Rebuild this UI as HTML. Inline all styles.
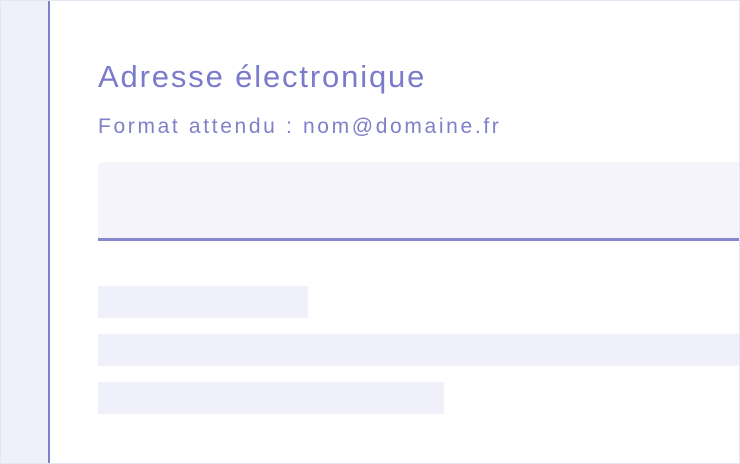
<!DOCTYPE html>
<html><head><style>
html,body{margin:0;padding:0;}
body{width:740px;height:464px;position:relative;overflow:hidden;background:#fff;font-family:"Liberation Sans",sans-serif;}
.frame{position:absolute;left:0;top:0;width:738px;height:462px;border:1px solid #e5e5f4;}
.side{position:absolute;left:1px;top:1px;width:47px;height:462px;background:#f0f0fa;border-right:2px solid #8080d0;}
.t{position:absolute;left:98px;top:59px;font-size:31px;line-height:36px;letter-spacing:1.85px;color:#7b7bcc;white-space:nowrap;}
.s{position:absolute;left:98px;top:114px;font-size:21px;line-height:26px;letter-spacing:2.65px;color:#8080c8;white-space:nowrap;}
.inp{position:absolute;left:98px;top:162px;width:641px;height:76px;background:#f4f4fa;border-bottom:3px solid #8585d0;border-radius:6px 0 0 0;}
.k{position:absolute;background:#f0f0fa;}
</style></head><body>
<div class="frame"></div>
<div class="side"></div>
<div class="t">Adresse électronique</div>
<div class="s">Format attendu : nom@domaine.fr</div>
<div class="inp"></div>
<div class="k" style="left:98px;top:286px;width:210px;height:32px"></div>
<div class="k" style="left:98px;top:334px;width:641px;height:32px"></div>
<div class="k" style="left:98px;top:382px;width:346px;height:32px"></div>
</body></html>
